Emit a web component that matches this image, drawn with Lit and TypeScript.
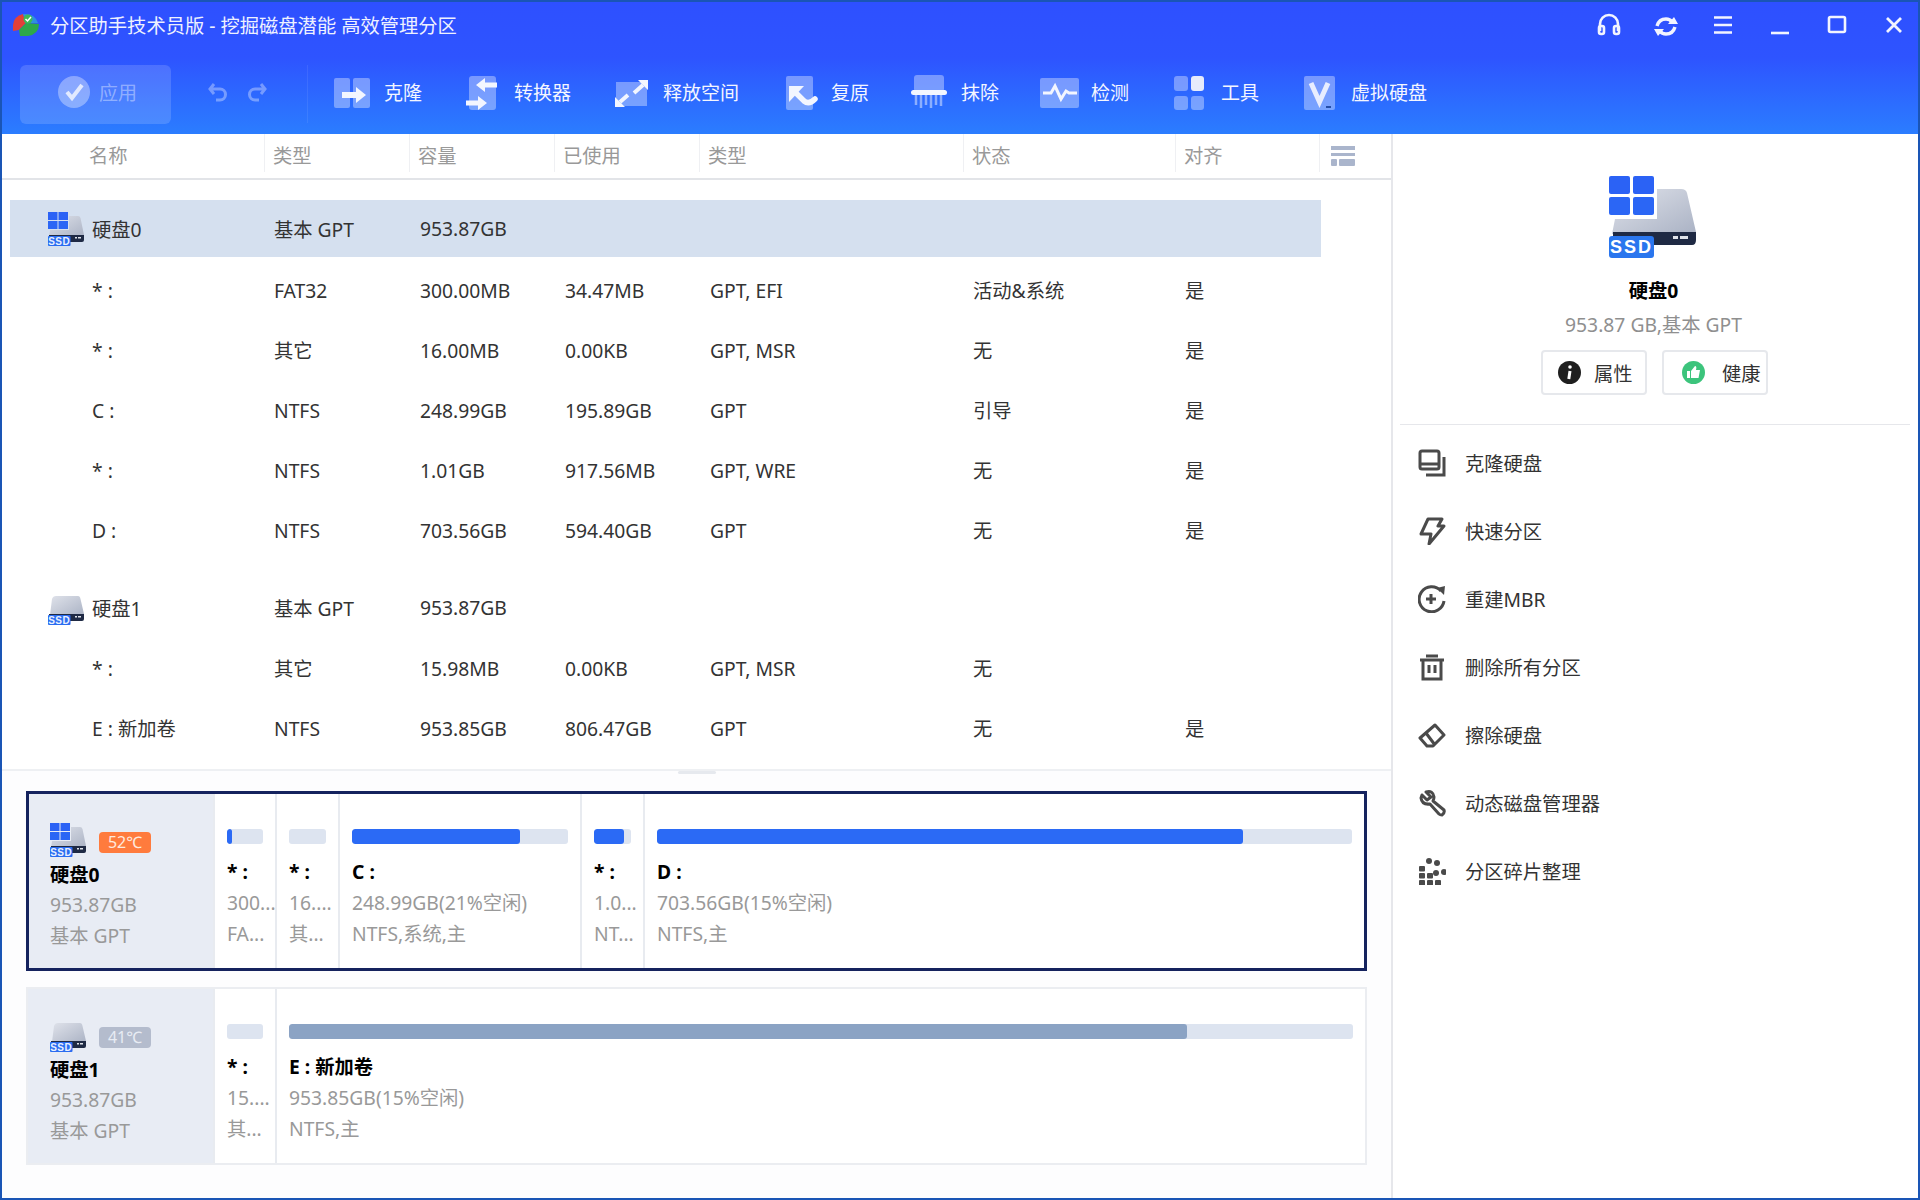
import { LitElement, css, html, svg } from 'lit';
import { customElement } from 'lit/decorators.js';

const gradient = svg`
  <defs>
    <linearGradient id="dg" x1="0" y1="0" x2="1" y2="1">
      <stop offset="0" stop-color="#dfe2ea" /><stop offset="1" stop-color="#aab2c4" />
    </linearGradient>
  </defs>
`;

const ssdIcon = () => html`
  <svg class="ssd" viewBox="0 0 87 82">
    ${gradient}
    <path d="M48 13H72Q77 13 78 17L87 56V58H3L6 43H48Z" fill="url(#dg)" />
    <rect y="0" width="21" height="18" rx="2" fill="#2b62f5" />
    <rect x="24" y="0" width="21" height="18" rx="2" fill="#2b62f5" />
    <rect y="21" width="21" height="18" rx="2" fill="#2b66f5" />
    <rect x="24" y="21" width="21" height="18" rx="2" fill="#2b66f5" />
    <path d="M4 56H87V64Q87 69 83 69H4Z" fill="#1f2a44" />
    <rect x="64" y="60" width="5" height="3" fill="#dfe3ea" />
    <rect x="71" y="60" width="8" height="3" fill="#dfe3ea" />
    <rect y="60" width="45" height="22" rx="3" fill="#2a76ee" />
    <text x="22.5" y="77" text-anchor="middle" font-family="Liberation Sans" font-weight="700" font-size="18" letter-spacing="2" fill="#fff">SSD</text>
  </svg>
`;

// the small drive icon has a bigger badge and windows than the large one
const smallSsd = (win: boolean) => html`
  <svg class="ssd" viewBox="0 0 36 34">
    ${gradient}
    ${win
      ? svg`<path d="M21 4H30Q32 4 32.500 6L36 23V25H1L2 18H21Z" fill="url(#dg)" />
          <rect width="9.500" height="8" fill="#2b62f5" /><rect x="10.500" width="9.500" height="8" fill="#2b62f5" />
          <rect y="9" width="9.500" height="8" fill="#2b66f5" /><rect x="10.500" y="9" width="9.500" height="8" fill="#2b66f5" />`
      : svg`<path d="M2 24L4 8Q5 5 8 5H30Q32 5 32.500 8L36 23V25H2Z" fill="url(#dg)" />`}
    <path d="M1 23H36V28Q36 30 34 30H1Z" fill="#1f2a44" />
    <rect x="27" y="25" width="2" height="1.500" fill="#dfe3ea" />
    <rect x="30" y="25" width="3" height="1.500" fill="#dfe3ea" />
    <rect y="24" width="22.500" height="10" rx="1" fill="#2a6cf0" />
    <text x="11.200" y="32.500" text-anchor="middle" font-family="Liberation Sans" font-weight="700" font-size="10" letter-spacing=".5" fill="#e9f0ff">SSD</text>
  </svg>
`;

const p = 'rgba(255,255,255,.36)';
const w = '#f3f6ff';
const toolIcons = [
  svg`<rect x="4" y="6" width="16" height="30" rx="2" fill=${p} /><rect x="23" y="6" width="17" height="30" rx="2" fill=${p} />
    <path d="M12 20H26V15L36 23L26 31V26H12Z" fill=${w} />`,
  svg`<rect x="9" y="4" width="27" height="34" rx="3" fill=${p} />
    <path d="M37 10.500H25V6L16 13L25 20V15.500H37Z" fill=${w} /><path d="M6 28.500H18V24L27 31L18 38V33.500H6Z" fill=${w} />`,
  svg`<rect x="7" y="10" width="31" height="24" fill=${p} />
    <path d="M39 8H29L39 18Z M6 35H16L6 25Z" fill=${w} />
    <path d="M34 13L25 21M11 30L19 23" stroke=${w} stroke-width="4" />`,
  svg`<rect x="9" y="4" width="27" height="34" rx="2" fill=${p} />
    <path d="M12 14H27L12 30Z" fill=${w} />
    <path d="M18 20L27 29Q32 33 38 27" fill="none" stroke=${w} stroke-width="5.500" stroke-linecap="round" />`,
  svg`<rect x="7" y="3" width="30" height="17" rx="3" fill=${p} /><rect x="4" y="18" width="36" height="5" rx="2.500" fill=${w} />
    <path d="M9 23V33M14 23V36M19 23V33M24 23V36M29 23V33M34 23V34" stroke="rgba(255,255,255,.45)" stroke-width="2.500" />`,
  svg`<rect x="3" y="6" width="39" height="30" rx="2" fill=${p} />
    <path d="M6 21H14L18 14L24 27L29 19L32 21H40" fill="none" stroke=${w} stroke-width="3" />`,
  svg`<rect x="7" y="4" width="14" height="15" rx="3" fill=${p} /><rect x="24" y="4" width="13" height="15" rx="3" fill="#e6ebfb" />
    <rect x="7" y="24" width="14" height="14" rx="3" fill=${p} /><rect x="24" y="24" width="13" height="14" rx="3" fill=${p} />`,
  svg`<rect x="7" y="4" width="31" height="34" rx="2" fill=${p} />
    <path d="M14 11L22.500 30L31 11" fill="none" stroke="#e8edff" stroke-width="5" /><rect x="29" y="34" width="5" height="2" fill="#244ea8" />`,
];

const tools = ['克隆', '转换器', '释放空间', '复原', '抹除', '检测', '工具', '虚拟硬盘'];
const columns = ['名称', '类型', '容量', '已使用', '类型', '状态', '对齐'];

const disks = [
  {
    name: '硬盘0',
    rows: [
      ['* :', 'FAT32', '300.00MB', '34.47MB', 'GPT, EFI', '活动&系统', '是'],
      ['* :', '其它', '16.00MB', '0.00KB', 'GPT, MSR', '无', '是'],
      ['C :', 'NTFS', '248.99GB', '195.89GB', 'GPT', '引导', '是'],
      ['* :', 'NTFS', '1.01GB', '917.56MB', 'GPT, WRE', '无', '是'],
      ['D :', 'NTFS', '703.56GB', '594.40GB', 'GPT', '无', '是'],
    ],
  },
  {
    name: '硬盘1',
    rows: [
      ['* :', '其它', '15.98MB', '0.00KB', 'GPT, MSR', '无', ''],
      ['E : 新加卷', 'NTFS', '953.85GB', '806.47GB', 'GPT', '无', '是'],
    ],
  },
];

// narrow cells show their text cut short, as the app itself does
const cards = [
  {
    name: '硬盘0', temp: '52℃', win: true, active: true,
    parts: [
      { w: 62, fill: 13, label: '* :', size: '300...', info: 'FA...' },
      { w: 63, fill: 0, label: '* :', size: '16....', info: '其...' },
      { w: 242, fill: 78, label: 'C :', size: '248.99GB(21%空闲)', info: 'NTFS,系统,主' },
      { w: 63, fill: 81, label: '* :', size: '1.0...', info: 'NT...' },
      { w: 0, fill: 84.300, label: 'D :', size: '703.56GB(15%空闲)', info: 'NTFS,主' },
    ],
  },
  {
    name: '硬盘1', temp: '41℃', win: false, active: false,
    parts: [
      { w: 62, fill: 0, label: '* :', size: '15....', info: '其...' },
      { w: 0, fill: 84.400, label: 'E : 新加卷', size: '953.85GB(15%空闲)', info: 'NTFS,主' },
    ],
  },
];

const menu = [
  ['克隆硬盘', svg`<g fill="none" stroke="#4a4a4a" stroke-width="3"><rect x="2" y="2" width="19" height="18" rx="2" /><path d="M2 15H21M8 26H26V8" /></g>`],
  ['快速分区', svg`<path d="M10 2H24L20 9H26L11 27L13 17H3Z" fill="none" stroke="#4a4a4a" stroke-width="3" stroke-linejoin="round" />`],
  ['重建MBR', svg`<g fill="none" stroke="#4a4a4a" stroke-width="3"><path d="M23 6A12.500 12.500 0 1 0 26 16" /><path d="M8 14H18M13 9V19" /></g><path d="M19 3L27 1L26 10Z" fill="#4a4a4a" />`],
  ['删除所有分区', svg`<g fill="none" stroke="#4a4a4a" stroke-width="3"><path d="M2 7H26M8 3H20" /><path d="M5 7V26H23V7M11 12V20M17 12V20" /></g>`],
  ['擦除硬盘', svg`<path d="M2 17L17 4L26 14L15 25H9ZM8 12L17 24" fill="none" stroke="#4a4a4a" stroke-width="3" stroke-linejoin="round" />`],
  ['动态磁盘管理器', svg`<path d="M4 6L9 11L13 8L8 3Q15 1 16 8Q16 10 15 12L26 21Q27 24 24 26Q22 26 21 25L12 15Q4 16 3 9Z" fill="none" stroke="#4a4a4a" stroke-width="3" stroke-linejoin="round" />`],
  ['分区碎片整理', svg`<g fill="#4a4a4a"><rect x="1" y="9" width="6" height="5.500" rx="1" /><rect x="1" y="16" width="6" height="5.500" rx="1" /><rect x="1" y="23" width="6" height="5.500" rx="1" /><rect x="9" y="16" width="6" height="5.500" rx="1" /><rect x="9" y="23" width="6" height="5.500" rx="1" /><rect x="17" y="23" width="6" height="5.500" rx="1" /><circle cx="11" cy="4" r="3" /><circle cx="19" cy="6" r="3" /><circle cx="18" cy="16" r="3" /><circle cx="26" cy="15" r="3" /></g>`],
];

@customElement('app-root')
export class AppRoot extends LitElement {
  static styles = css`
    :host {
      display: block;
      width: 1920px;
      height: 1200px;
      font-family: 'Noto Sans', 'Noto Sans CJK SC', sans-serif;
      font-size: 19.3px;
      color: #333;
    }
    * { box-sizing: border-box; }
    .window {
      width: 100%;
      height: 100%;
      display: flex;
      flex-direction: column;
      border: 2px solid #1a55b5;
      background: #fff;
    }
    .header {
      height: 132px;
      flex: none;
      background: linear-gradient(#2e50ff 0, #2e54ff 42%, #2b7dff 100%);
      color: #fff;
    }
    .titlebar {
      height: 46px;
      display: flex;
      align-items: center;
      padding: 0 10px;
    }
    .logo { width: 28px; height: 26px; margin-right: 10px; }
    .title { flex: 1; color: #eef1ff; }
    .controls { display: flex; gap: 29px; }
    .controls svg { width: 28px; height: 28px; display: block; }
    .toolbar {
      display: flex;
      align-items: center;
      height: 60px;
      margin-top: 16px;
      padding-left: 18px;
      font-size: 19px;
    }
    .apply {
      width: 151px;
      height: 59px;
      display: flex;
      align-items: center;
      gap: 7px;
      padding: 0 0 4px 36px;
      border-radius: 6px;
      background: rgba(255, 255, 255, .15);
      color: rgba(255, 255, 255, .4);
    }
    .apply svg { width: 36px; height: 36px; }
    .history { display: flex; gap: 17px; margin: -4px 0 0 36px; width: 100px; }
    .history svg { width: 22px; height: 22px; }
    .vsep { width: 1px; height: 58px; background: rgba(255, 255, 255, .08); margin-right: 23px; }
    .tools { display: flex; gap: 38px; margin-top: -4px; margin-left: -1px; }
    .tool { display: flex; align-items: center; gap: 10px; color: #f4f6ff; }
    .tool svg { width: 44px; height: 40px; }

    .body { flex: 1; display: flex; min-height: 0; }
    .left {
      width: 1391px;
      flex: none;
      border-right: 2px solid #e6e7eb;
      display: flex;
      flex-direction: column;
    }
    .table { height: 637px; flex: none; border-bottom: 2px solid #eef0f3; position: relative; }
    .thead {
      display: grid;
      grid-template-columns: 262px 145px 145px 145px 264px 212px 144px 71px;
      height: 46px;
      border-bottom: 2px solid #e2e4e8;
      color: #999;
    }
    .thead div {
      height: 38px;
      line-height: 44px;
      padding-left: 8px;
      border-left: 1px solid #eff0f3;
    }
    .thead div:first-child { border-left: none; padding-left: 87px; }
    .thead svg { width: 26px; height: 22px; margin: 11px 0 0 3px; display: block; }
    .rows { padding: 20px 0 0 8px; }
    .row {
      width: 1311px;
      height: 60px;
      display: grid;
      grid-template-columns: 254px 146px 145px 145px 263px 212px 146px;
      align-items: center;
    }
    .row > div { padding-left: 10px; }
    .row > .name { padding-left: 82px; }
    .row.disk { height: 57px; margin-bottom: 3px; }
    .row.disk > .name { padding-left: 38px; display: flex; align-items: center; gap: 8px; }
    .row.sel { background: #d5e0ef; }
    .group { margin-bottom: 19px; }
    .group:last-child .row.disk { margin-bottom: 2px; }
    .row .ssd { width: 36px; height: 34px; }
    .handle {
      position: absolute;
      left: 676px;
      bottom: -5px;
      width: 38px;
      height: 3px;
      border-radius: 2px;
      background: #e6e9ee;
    }

    .cards {
      flex: 1;
      padding: 20px 24px 0;
      display: flex;
      flex-direction: column;
      gap: 16px;
      background: #fdfdfe;
    }
    .card {
      height: 178px;
      display: flex;
      border: 2px solid #ebedf1;
      background: #fff;
    }
    .card.active { height: 180px; border: 3px solid #15235e; }
    .info {
      width: 185px;
      flex: none;
      padding: 29px 0 0 22px;
      background: #e8ecf4;
      line-height: 31px;
      color: #999;
    }
    .card.active .info { width: 184px; padding-left: 21px; }
    .head { display: flex; align-items: center; gap: 13px; height: 34px; }
    .head .ssd { width: 36px; height: 34px; }
    .temp {
      width: 52px;
      height: 21px;
      border-radius: 4px;
      background: #b4bccd;
      color: #e8ecf4;
      font-size: 16px;
      line-height: 21px;
      text-align: center;
      margin-top: 4px;
    }
    .active .temp { background: #ff7b3d; color: #ffe9dd; }
    .info b { display: block; color: #000; line-height: 32px; margin: 2px 0 -2px; }
    .part {
      flex: none;
      padding: 35px 0 0 12px;
      border-left: 2px solid #e8ebf0;
      min-width: 0;
      line-height: 31px;
      color: #999;
    }
    .part.grow { flex: 1; }
    .part div { white-space: nowrap; }
    .part b { display: block; color: #000; line-height: 31px; margin-top: 12px; }
    .track {
      height: 15px;
      margin-right: 12px;
      background: #dde4f0;
      border-radius: 3px;
      overflow: hidden;
    }
    .bar { height: 100%; background: #2b6af5; border-radius: 3px; }
    .card:not(.active) .bar { background: #8ba3c4; }

    .side { flex: 1; display: flex; flex-direction: column; padding-top: 42px; }
    .side-top { display: flex; flex-direction: column; align-items: center; padding-right: 4px; }
    .side-top .ssd { width: 87px; height: 82px; margin-left: -2px; }
    .side-name { font-weight: 700; color: #000; line-height: 26px; margin-top: 20px; }
    .side-sub { color: #8f8f8f; line-height: 26px; margin-top: 8px; }
    .btns { display: flex; gap: 15px; margin: 12px 0 0 2px; }
    .btn {
      width: 106px;
      height: 45px;
      border: 2px solid #e6e8ec;
      border-radius: 4px;
      display: flex;
      align-items: center;
      gap: 13px;
      padding-left: 15px;
    }
    .btn.health { gap: 17px; padding-left: 18px; }
    .btn svg { width: 23px; height: 23px; }
    .divider { height: 1px; margin: 29px 8px 4px 7px; background: #e6e7eb; }
    .item { height: 68px; display: flex; align-items: center; gap: 19px; padding-left: 25px; }
    .item svg { width: 28px; height: 28px; }
  `;

  render() {
    return html`
      <div class="window">
        <div class="header">
          <div class="titlebar">
            <svg class="logo" viewBox="0 0 28 26">
              <path d="M1 13Q2 4 11 2L14 11L7 18L1 19Z" fill="#e2403a" />
              <path d="M11 2Q23 1 26 11L14 11Z" fill="#2f8fe0" />
              <path d="M7 18L14 11L27 12Q27 22 16 24L8 24Z" fill="#2da84a" />
              <circle cx="16" cy="7" r="4.500" fill="#3bb85a" />
              <path d="M13.500 7L15.500 9L19 5" fill="none" stroke="#fff" stroke-width="1.500" />
            </svg>
            <div class="title">分区助手技术员版 - 挖掘磁盘潜能 高效管理分区</div>
            <div class="controls">
              <svg viewBox="0 0 28 28" fill="none" stroke="#f2f4ff" stroke-width="2.600">
                <path d="M5 20V13A9 9 0 0 1 23 13V20" /><rect x="4" y="15" width="5" height="8" rx="2" /><rect x="19" y="15" width="5" height="8" rx="2" />
              </svg>
              <svg viewBox="0 0 28 28" fill="none" stroke="#f2f4ff" stroke-width="3.400">
                <path d="M5 15Q7 8 14 8Q18 8 20 11M23 16Q21 23 14 23Q10 23 8 20" />
                <path d="M16 13H26L22 6Z M12 18H2L6 25Z" fill="#f2f4ff" stroke="none" />
              </svg>
              <svg viewBox="0 0 28 28" stroke="#f2f4ff" stroke-width="2.600"><path d="M5 6.500H23M5 14H23M5 21.500H23" /></svg>
              <svg viewBox="0 0 28 28" stroke="#f2f4ff" stroke-width="2.600"><path d="M5 22H23" /></svg>
              <svg viewBox="0 0 28 28" fill="none" stroke="#f2f4ff" stroke-width="2.600"><rect x="6" y="6" width="16" height="15" rx="1.500" /></svg>
              <svg viewBox="0 0 28 28" stroke="#f2f4ff" stroke-width="2.800"><path d="M7 7L21 21M21 7L7 21" /></svg>
            </div>
          </div>
          <div class="toolbar">
            <div class="apply">
              <svg viewBox="0 0 36 36">
                <circle cx="18" cy="18" r="16" fill="rgba(255,255,255,.35)" />
                <path d="M11 18L16 24L26 11" fill="none" stroke="rgba(255,255,255,.75)" stroke-width="4" />
              </svg>
              应用
            </div>
            <div class="history">
              <svg viewBox="0 0 22 22" fill="none" stroke="rgba(255,255,255,.35)" stroke-width="3">
                <path d="M3 8H13A5.500 5.500 0 0 1 13 19H9M7 3L3 8L7 13" />
              </svg>
              <svg viewBox="0 0 22 22" fill="none" stroke="rgba(255,255,255,.35)" stroke-width="3">
                <path d="M19 8H9A5.500 5.500 0 0 0 9 19H13M15 3L19 8L15 13" />
              </svg>
            </div>
            <div class="vsep"></div>
            <div class="tools">
              ${tools.map((t, i) => html`
                <div class="tool"><svg viewBox="0 0 44 40">${toolIcons[i]}</svg>${t}</div>
              `)}
            </div>
          </div>
        </div>
        <div class="body">
          <div class="left">
            <div class="table">
              <div class="thead">
                ${columns.map(c => html`<div>${c}</div>`)}
                <div>
                  <svg viewBox="0 0 26 22" fill="#aab5cc">
                    <rect width="24" height="4" y="1" /><rect width="24" height="3" y="8" />
                    <rect width="6" height="7" y="14" rx="1" /><rect x="8" width="16" height="7" y="14" rx="1" />
                  </svg>
                </div>
              </div>
              <div class="rows">
                ${disks.map((d, di) => html`
                  <div class="group">
                    <div class="row disk ${di === 0 ? 'sel' : ''}">
                      <div class="name">${smallSsd(di === 0)}<span>${d.name}</span></div>
                      <div>基本 GPT</div><div>953.87GB</div>
                    </div>
                    ${d.rows.map(r => html`
                      <div class="row">
                        <div class="name">${r[0]}</div>
                        ${r.slice(1).map(c => html`<div>${c}</div>`)}
                      </div>
                    `)}
                  </div>
                `)}
              </div>
              <div class="handle"></div>
            </div>
            <div class="cards">
              ${cards.map(c => html`
                <div class="card ${c.active ? 'active' : ''}">
                  <div class="info">
                    <div class="head">${smallSsd(c.win)}<span class="temp">${c.temp}</span></div>
                    <b>${c.name}</b>
                    <div>953.87GB</div>
                    <div>基本 GPT</div>
                  </div>
                  ${c.parts.map(pt => html`
                    <div class="part ${pt.w ? '' : 'grow'}" style=${pt.w ? `width:${pt.w}px` : ''}>
                      <div class="track"><div class="bar" style="width:${pt.fill}%"></div></div>
                      <b>${pt.label}</b>
                      <div>${pt.size}</div>
                      <div>${pt.info}</div>
                    </div>
                  `)}
                </div>
              `)}
            </div>
          </div>
          <div class="side">
            <div class="side-top">
              ${ssdIcon()}
              <div class="side-name">硬盘0</div>
              <div class="side-sub">953.87 GB,基本 GPT</div>
              <div class="btns">
                <div class="btn">
                  <svg viewBox="0 0 23 23">
                    <circle cx="11.500" cy="11.500" r="11.500" fill="#1f1f1f" />
                    <circle cx="12" cy="6" r="1.800" fill="#fff" /><path d="M12 10L10.800 18" stroke="#fff" stroke-width="3" />
                  </svg>
                  属性
                </div>
                <div class="btn health">
                  <svg viewBox="0 0 23 23">
                    <circle cx="11.500" cy="11.500" r="11.500" fill="#3cc47c" />
                    <rect x="5" y="10" width="3" height="7" fill="#fff" />
                    <path d="M9 10L13 5Q15 5 14 9H18L16.500 17H9Z" fill="#fff" />
                  </svg>
                  健康
                </div>
              </div>
            </div>
            <div class="divider"></div>
            ${menu.map(m => html`
              <div class="item"><svg viewBox="0 0 28 28">${m[1]}</svg>${m[0]}</div>
            `)}
          </div>
        </div>
      </div>
    `;
  }
}
